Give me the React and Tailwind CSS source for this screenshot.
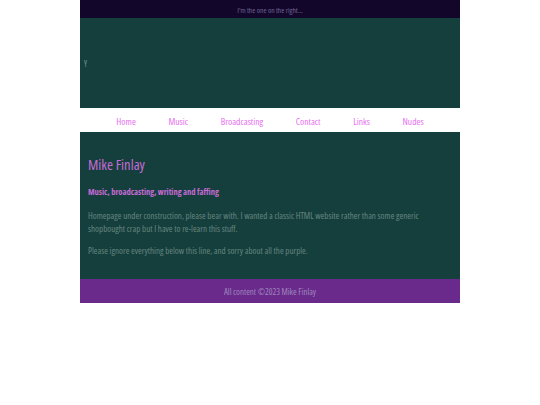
export default function App() {
  const links = ["Home", "Music", "Broadcasting", "Contact", "Links", "Nudes"];
  return (
    <div className="min-h-[405px] bg-white font-['Open_Sans',sans-serif] font-stretch-condensed">
      <div className="mx-auto w-[380px]">
        <div className="flex h-[18px] items-center justify-center bg-[#12072a] pt-[4px] text-[7.5px] text-[#6d6190]">
          I'm the one on the right...
        </div>
        <div className="flex h-[90px] items-center bg-[#143f3d] pl-1 pt-[2px] text-[8px] text-[#6f9892]">Y</div>
        <nav className="flex h-[24px] items-center justify-around bg-white px-5 pt-[3px] text-[9.5px] text-[#e76ff0]">
          {links.map((l) => (
            <a key={l} href="#" className="leading-none">
              {l}
            </a>
          ))}
        </nav>
        <main className="bg-[#143f3d] px-2 pt-[23px] pb-[22px]">
          <h1 className="text-[14.5px] leading-[20px] text-[#c76ad6]">Mike Finlay</h1>
          <h2 className="mt-[11px] text-[8.5px] font-bold leading-[12px] text-[#c76ad6]">
            Music, broadcasting, writing and faffing
          </h2>
          <p className="mt-[11px] text-[9px] leading-[13px] text-[#67857f]">
            Homepage under construction, please bear with. I wanted a classic HTML website rather than some generic
            shopbought crap but I have to re-learn this stuff.
          </p>
          <p className="mt-[9px] text-[9px] leading-[13px] text-[#67857f]">
            Please ignore everything below this line, and sorry about all the purple.
          </p>
        </main>
        <footer className="flex h-[24px] items-center justify-center bg-[#6a2a8c] pt-[3px] text-[8.8px] text-[#9f86bc]">
          All content ©2023 Mike Finlay
        </footer>
      </div>
    </div>
  );
}
